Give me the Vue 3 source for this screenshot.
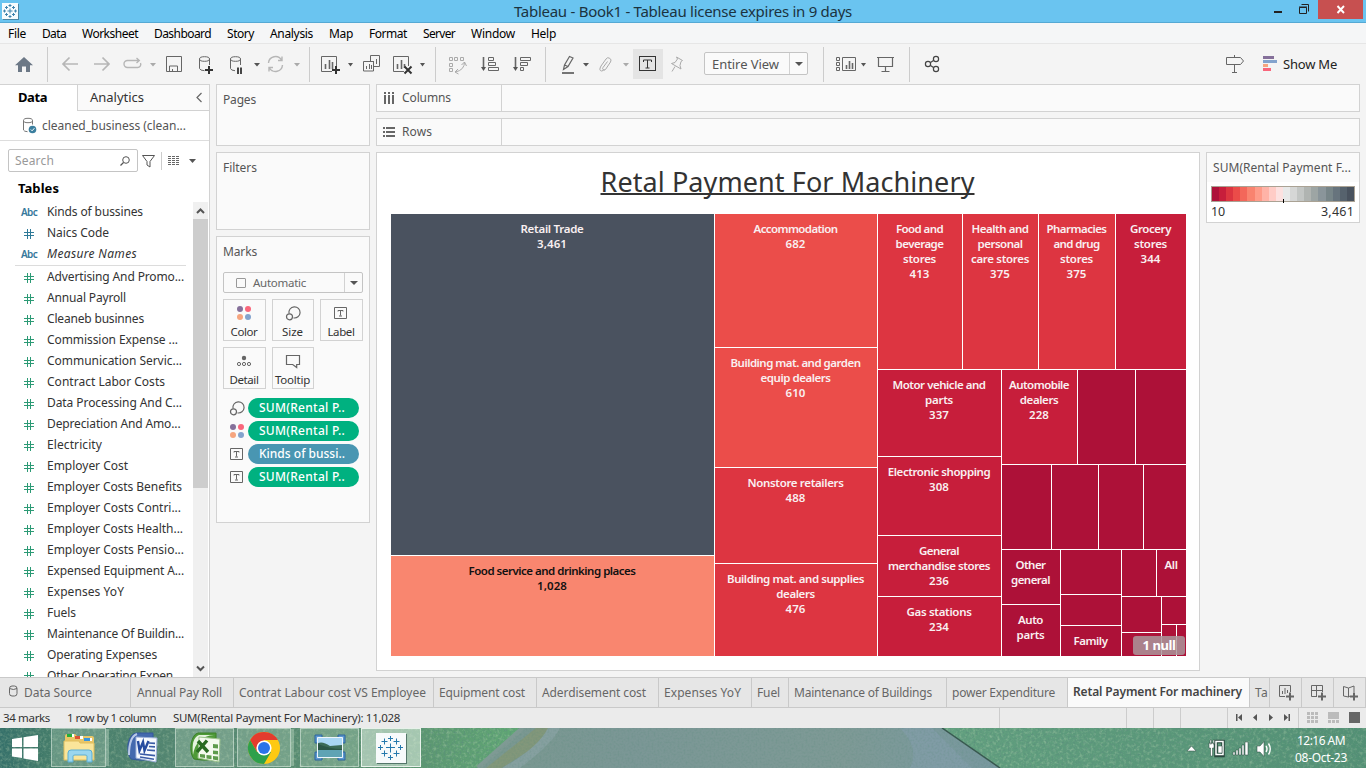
<script setup>
// Spreads the letters of a label so that it takes the given width in pixels.
const vFit = (el, { value }) => {
  el.style.letterSpacing = '0px'
  const natural = el.getBoundingClientRect().width
  el.style.letterSpacing = (value - natural) / el.textContent.trim().length + 'px'
}

const menu = [['File', 18], ['Data', 24], ['Worksheet', 56], ['Dashboard', 57], ['Story', 27], ['Analysis', 43], ['Map', 24], ['Format', 38], ['Server', 32], ['Window', 44], ['Help', 25]]

const dims = [['Abc', 'Kinds of bussines', 96], ['#', 'Naics Code', 62], ['Abc', 'Measure Names', 90]]
const measures = [
  ['Advertising And Promo...', 137], ['Annual Payroll', 79], ['Cleaneb businnes', 97], ['Commission Expense ...', 131],
  ['Communication Servic...', 135], ['Contract Labor Costs', 118], ['Data Processing And C...', 135], ['Depreciation And Amo...', 133.5],
  ['Electricity', 55], ['Employer Cost', 81], ['Employer Costs Benefits', 135], ['Employer Costs Contri...', 134],
  ['Employer Costs Health...', 136], ['Employer Costs Pensio...', 137], ['Expensed Equipment A...', 137], ['Expenses YoY', 77],
  ['Fuels', 29], ['Maintenance Of Buildin...', 137], ['Operating Expenses', 110], ['Other Operating Expen...', 135],
]

const markButtons = [['color', 'Color', 27], ['size', 'Size', 21], ['label', 'Label', 27], ['detail', 'Detail', 29], ['tooltip', 'Tooltip', 35]]
const pills = [['size', 'SUM(Rental P..', 86], ['color', 'SUM(Rental P..', 86], ['label', 'Kinds of bussi..', 86, true], ['label', 'SUM(Rental P..', 86]]

const tones = { a: '#4a525f', b: '#f9866f', c: '#eb4d4a', d: '#dd3541', e: '#c71e3b', f: '#ad1138' }
// left, top, right, bottom, tone, label lines with their widths
const cells = [
  [391, 214, 715, 556, 'a', [['Retail Trade', 63], ['3,461', 30]]],
  [391, 556, 715, 657, 'b', [['Food service and drinking places', 167], ['1,028', 30]]],
  [715, 214, 878, 348, 'c', [['Accommodation', 84], ['682', 20]]],
  [715, 348, 878, 468, 'c', [['Building mat. and garden', 130], ['equip dealers', 70], ['610', 20]]],
  [715, 468, 878, 564, 'd', [['Nonstore retailers', 96], ['488', 20]]],
  [715, 564, 878, 657, 'd', [['Building mat. and supplies', 137], ['dealers', 38.5], ['476', 20]]],
  [878, 214, 963, 370, 'd', [['Food and', 47], ['beverage', 48], ['stores', 33], ['413', 20]]],
  [963, 214, 1039, 370, 'd', [['Health and', 57], ['personal', 45], ['care stores', 58], ['375', 20]]],
  [1039, 214, 1116, 370, 'd', [['Pharmacies', 60], ['and drug', 46], ['stores', 33], ['375', 20]]],
  [1116, 214, 1187, 370, 'e', [['Grocery', 41], ['stores', 33], ['344', 20]]],
  [878, 370, 1002, 457, 'e', [['Motor vehicle and', 93], ['parts', 28], ['337', 20]]],
  [878, 457, 1002, 536, 'e', [['Electronic shopping', 102.5], ['308', 20]]],
  [878, 536, 1002, 597, 'e', [['General', 40], ['merchandise stores', 102], ['236', 20]]],
  [878, 597, 1002, 657, 'e', [['Gas stations', 65], ['234', 20]]],
  [1002, 370, 1078, 465, 'e', [['Automobile', 60], ['dealers', 38.5], ['228', 20]]],
  [1078, 370, 1136, 465, 'f', []],
  [1136, 370, 1187, 465, 'f', []],
  [1002, 465, 1052, 550, 'f', []],
  [1052, 465, 1099, 550, 'f', []],
  [1099, 465, 1144, 550, 'f', []],
  [1144, 465, 1187, 550, 'f', []],
  [1002, 550, 1061, 605, 'f', [['Other', 30], ['general', 39]]],
  [1002, 605, 1061, 657, 'f', [['Auto', 25], ['parts', 28]]],
  [1061, 550, 1122, 595, 'f', []],
  [1061, 595, 1122, 626, 'f', []],
  [1061, 626, 1122, 657, 'f', [['Family', 34]]],
  [1122, 550, 1157, 597, 'f', []],
  [1157, 550, 1187, 597, 'f', [['All', 13]]],
  [1122, 597, 1162, 633, 'f', []],
  [1122, 633, 1162, 657, 'f', []],
  [1162, 597, 1187, 625, 'f', []],
  [1162, 625, 1177, 657, 'f', []],
  [1177, 625, 1187, 657, 'f', []],
]
const edges = (a, b) => [...new Set(cells.flatMap((c) => [c[a], c[b]]))].sort((m, n) => m - n)
const xs = edges(0, 2)
const ys = edges(1, 3)
const tracks = (list) => list.slice(1).map((v, i) => v - list[i] + 'px').join(' ')
const gridStyle = { gridTemplateColumns: tracks(xs), gridTemplateRows: tracks(ys) }
const cellStyle = (c) => ({
  gridArea: [ys.indexOf(c[1]) + 1, xs.indexOf(c[0]) + 1, ys.indexOf(c[3]) + 1, xs.indexOf(c[2]) + 1].join(' / '),
  background: tones[c[4]],
})

const ramp = ['#ae123a', '#c71e3b', '#dc3540', '#eb4c49', '#f3675a', '#f9836f', '#fe9b89', '#ffb3a7', '#ffccc6', '#fce1e0', '#e8e9e9', '#d6d7d6', '#c3c6c4', '#b0b4b1', '#9da5a4', '#8a959a', '#778588', '#67747d', '#56626d', '#49525e']

// label, label width, tab width
const tabs = [['Annual Pay Roll', 85, 103], ['Contrat Labour cost VS Employee', 187, 200], ['Equipment cost', 86, 103], ['Aderdisement cost', 104, 122], ['Expenses YoY', 77, 93], ['Fuel', 23, 37], ['Maintenance of Buildings', 138, 158], ['power Expenditure', 103, 121]]
</script>

<template>
  <div class="screen">
    <header class="titlebar">
      <svg class="logo" width="16" height="16" viewBox="0 0 16 16">
        <rect width="16" height="16" fill="#f7fbfd" />
        <path d="M8 5.500v5M5.500 8h5M8 1v3M6.500 2.500h3M8 12v3M6.500 13.500h3M2.500 6.500v3M1 8h3M13.500 6.500v3M12 8h3M4.500 3v3M3 4.500h3M11.500 3v3M10 4.500h3M4.500 10v3M3 11.500h3M11.500 10v3M10 11.500h3" stroke="#3f83ad" fill="none" />
      </svg>
      <h1><span v-fit="338">Tableau - Book1 - Tableau license expires in 9 days</span></h1>
      <svg class="winbtns" width="96" height="22" viewBox="1270 0 96 22">
        <rect x="1318" width="45" height="19" fill="#c75050" />
        <path d="M1274 12h8" stroke="#222" stroke-width="2" />
        <path d="M1299.500 7.500h7v6h-7zM1299 7h8M1301.500 4.500h7v7" stroke="#222" fill="none" />
        <path d="M1337.500 6l6.500 7M1344 6l-6.500 7" stroke="#fff" stroke-width="1.900" />
      </svg>
    </header>

    <nav class="menubar"><span v-for="m in menu" :key="m[0]" v-fit="m[1]">{{ m[0] }}</span></nav>

    <div class="toolbar">
      <svg width="48" height="40" viewBox="0 44 48 40">
        <path d="M15 65.200L24 57l9 8.200h-3V72h-4v-5.500h-4V72h-4v-6.800z" fill="#6c7886" />
        <path d="M47.500 47v35" stroke="#ccc" />
      </svg>
      <svg width="262" height="40" viewBox="48 44 262 40" fill="none" stroke="#666">
        <g stroke="#b6b6b6" stroke-width="1.700">
          <path d="M78 64H63M69.500 57.500L63 64l6.500 6.500M94 64h15M102.500 57.500L109 64l-6.500 6.500" />
          <path d="M132 67.500h-4.500a3.500 3.500 0 0 1 0-7H139M136.500 58l2.800 2.500-2.800 2.500M131 67.500h6.500a3.200 3.200 0 0 0 3-4.500" stroke-width="1.400" />
          <path d="M268.500 63a7 7 0 0 1 13-3M282.500 65a7 7 0 0 1-13 3M282 56.500v4h-4M269 71.500v-4h4" stroke-width="1.400" />
        </g>
        <path d="M150 63h6l-3 3.500zM294 63h6l-3 3.500z" fill="#aaa" stroke="none" />
        <path d="M254 63h6l-3 3.500z" fill="#555" stroke="none" />
        <path d="M166.500 56.500h15v15h-15zM169.500 71v-5h8v5M172.500 71v-2" />
        <ellipse cx="204.500" cy="59" rx="5" ry="2.300" />
        <path d="M199.500 59v9.500q.5 2 5 2.200M209.500 59v6" />
        <path d="M209 66v8M205 70h8" stroke="#333" stroke-width="2" />
        <ellipse cx="235.500" cy="59" rx="5" ry="2.300" />
        <path d="M230.500 59v9.500q.5 2 4.500 2.200M240.500 59v6" />
        <path d="M238 67.500v6.500M241 67.500v6.500" stroke="#333" stroke-width="1.800" />
        <path d="M309.500 47v35" stroke="#ccc" />
      </svg>
      <svg width="126" height="40" viewBox="310 44 126 40" fill="none" stroke="#666">
        <path d="M332 71.500h-10.500v-15h15V66M393.500 71.500v-15h15V66M393.500 71.500H404" />
        <path d="M325.500 64v5M329.500 60v9M332.500 62v7M397.500 64v5M401.500 60v9M404.500 64v4" stroke-width="1.600" />
        <path d="M336 66v8M332 70h8M404.500 66.500l7 7M411.500 66.500l-7 7" stroke="#333" stroke-width="2" />
        <path d="M370.500 61v-5.500h9v11h-5.500M363.500 61.500h10v9.500h-10zM373.500 61v3M376.500 59v5M366.500 66v3M369.500 64v5M371.500 65v4" />
        <path d="M348 63h5l-2.500 3.500zM420 63h5l-2.500 3.500z" fill="#555" stroke="none" />
        <path d="M435.500 47v35" stroke="#ccc" />
      </svg>
      <svg width="110" height="40" viewBox="436 44 110 40" fill="none" stroke="#666">
        <g stroke="#aaa"><path d="M449.500 57.500h3v3h-3zM454.500 57.500h3v3h-3zM460.500 57.500h3v3h-3zM449.500 63.500h3v3h-3zM449.500 68.500h3v3h-3zM464.500 62q0 8-9 10M461.500 65l3-3 2 4M458 69l-3 3 3.500 2" /></g>
        <path d="M488.500 57.500h5v3h-5zM488.500 62.500h7v3h-7zM488.500 67.500h10v3h-10zM520.500 57.500h10v3h-10zM520.500 62.500h7v3h-7zM520.500 67.500h3v3h-3z" />
        <path d="M483.500 57v11M515.500 57v11" stroke-width="1.600" />
        <path d="M481 67h5l-2.500 4zM513 67h5l-2.500 4z" fill="#555" stroke="none" />
        <path d="M545.500 47v35" stroke="#ccc" />
      </svg>
      <svg width="158" height="40" viewBox="546 44 158 40" fill="none" stroke="#666">
        <path d="M562 73h12" stroke-width="1.800" />
        <path d="M563.500 69.500l1-4.500 5-8.500 3.500 1.500-5 8.500zM564.500 65l3.500 1.500" stroke-width="1.200" />
        <path d="M583 63h6l-3 3.500z" fill="#555" stroke="none" />
        <path d="M601 66l5-7a2.600 2.600 0 0 1 4.500 3l-5 7.500a1.500 1.500 0 0 1-2.500-2l4.500-6M601 66q-2.500 4.500.5 5 2 0 3-2" stroke="#aaa" />
        <path d="M623 63h6l-3 3.500z" fill="#aaa" stroke="none" />
        <rect x="633" y="49" width="30" height="30" fill="#e4e4e4" stroke="none" />
        <rect x="639.500" y="56.500" width="16" height="14" stroke="#333" />
        <path d="M643.500 62v-2h8v2M647.500 60v8M645.500 68h4" stroke="#333" />
        <path d="M676.500 57l6 3.500-1.500 1-1 4 1 3.500-9.500-5.500 3.500-1 2.500-3.500zM675 66.500l-3 5" stroke="#aaa" />
      </svg>
      <div class="view"><span v-fit="67">Entire View</span><b class="drop"><i class="caret"></i></b></div>
      <svg width="418" height="40" viewBox="808 44 418 40" fill="none" stroke="#666">
        <path d="M823.500 47v35M909.500 47v35" stroke="#ccc" />
        <path d="M836.500 57.500h3v3h-3zM836.500 62.500h3v3h-3zM836.500 67.500h3v3h-3zM842.500 57.500h13v13h-13z" />
        <path d="M846.500 65v4M849.500 61v8M852.500 63v6" stroke-width="1.600" />
        <path d="M861 63h5l-2.500 3.500z" fill="#555" stroke="none" />
        <path d="M877 57.500h17M878.500 58v8.500h14V58M885.500 67v5M881.500 71.500h8" stroke-width="1.200" />
        <g stroke="#444" stroke-width="1.200"><path d="M930.500 62.500l3-2M930.500 65.500l3 2" /><circle cx="928" cy="64" r="2.600" /><circle cx="936" cy="59" r="2.600" /><circle cx="936" cy="69" r="2.600" /></g>
      </svg>
      <svg width="57" height="40" viewBox="1226 44 57 40" fill="none" stroke="#666">
        <path d="M1226.500 57.500h14l3 3.500-3 3.500h-14zM1234.500 55v2M1234.500 65v7.500M1232 72.500h5" />
        <g stroke="none"><path d="M1263 56h11v3h-11z" fill="#85709a" /><path d="M1263 60h14v3h-14z" fill="#83a3cd" /><path d="M1263 64h5v3h-5z" fill="#f6a57f" /><path d="M1263 68h8v3h-8z" fill="#f9667b" /></g>
      </svg>
      <span class="showme"><span v-fit="54">Show Me</span></span>
    </div>

    <main class="main">
      <aside class="pane">
        <div class="panetabs">
          <b><span v-fit="29">Data</span></b>
          <div><span v-fit="54">Analytics</span><svg width="8" height="12" viewBox="0 0 8 12"><path d="M6.500 1L2 5.500l4.500 4.500" fill="none" stroke="#666" stroke-width="1.200" /></svg></div>
        </div>
        <div class="source">
          <svg width="15" height="18" viewBox="22 117 15 18" fill="none" stroke="#777">
            <ellipse cx="28" cy="120.500" rx="4.500" ry="2.200" /><path d="M23.500 120.500v9.500q.5 1.500 4 1.700M32.500 120.500v4" />
            <circle cx="32.500" cy="129.500" r="3.800" fill="#3b7f9f" stroke="none" /><path d="M30.800 129.500l1.300 1.300 2.300-2.600" stroke="#fff" />
          </svg>
          <span v-fit="144">cleaned_business (clean...</span>
        </div>
        <div class="searchrow">
          <div class="search"><span v-fit="39">Search</span><svg width="10" height="10" viewBox="0 0 10 10"><circle cx="6" cy="4" r="3.300" fill="none" stroke="#555" /><path d="M3.500 6.500L.5 9.500" stroke="#555" stroke-width="1.200" /></svg></div>
          <svg width="56" height="20" viewBox="141 150 56 20" fill="none" stroke="#555">
            <path d="M142.500 154.500h12l-4.500 6v5.500l-3-2v-3.500z" /><path d="M161.500 151v18" stroke="#ccc" />
            <path d="M168 155.500h12M168 157.500h12M168 159.500h12M168 161.500h12M168 163.500h12" stroke-dasharray="3 1" stroke="#666" />
            <path d="M189 158h7l-3.500 4z" fill="#555" stroke="none" />
          </svg>
        </div>
        <div class="tables"><span v-fit="41">Tables</span></div>
        <div class="listwrap">
          <div class="list">
            <div v-for="(d, i) in dims" :key="d[1]" class="field" :class="{ it: i === 2 }">
              <span v-if="d[0] === 'Abc'" class="abc"><span v-fit="16">Abc</span></span>
              <svg v-else class="hash" width="10" height="10" viewBox="0 0 10 10"><path d="M3.500 0v10M6.500 0v10M0 3.500h10M0 6.500h10" stroke="#2f7a98" fill="none" /></svg>
              <span v-fit="d[2]">{{ d[1] }}</span>
            </div>
            <hr />
            <div v-for="m in measures" :key="m[0]" class="field">
              <svg class="hash" width="10" height="10" viewBox="0 0 10 10"><path d="M3.500 0v10M6.500 0v10M0 3.500h10M0 6.500h10" stroke="#2c9a75" fill="none" /></svg>
              <span v-fit="m[1]">{{ m[0] }}</span>
            </div>
          </div>
          <div class="scroll">
            <svg width="15" height="17" viewBox="0 0 15 17"><path d="M4 11l3.500-3.500L11 11" fill="none" stroke="#555" stroke-width="2" /></svg>
            <div class="thumb"></div>
            <svg width="15" height="17" viewBox="0 0 15 17"><path d="M4 6.500L7.500 10 11 6.500" fill="none" stroke="#555" stroke-width="2" /></svg>
          </div>
        </div>
      </aside>

      <section class="cards">
        <div class="card pages"><span v-fit="33">Pages</span></div>
        <div class="card filters"><span v-fit="34">Filters</span></div>
        <div class="card marks">
          <span v-fit="34">Marks</span>
          <div class="select"><i class="sq"></i><span v-fit="53">Automatic</span><b class="drop"><i class="caret"></i></b></div>
          <div class="btns">
            <div v-for="b in markButtons" :key="b[0]" class="btn">
              <svg width="16" height="16"><use :href="'#i-' + b[0]" /></svg>
              <span v-fit="b[2]">{{ b[1] }}</span>
            </div>
          </div>
          <div class="pills">
            <div v-for="(p, i) in pills" :key="i" class="pillrow">
              <svg width="16" height="16"><use :href="'#i-' + p[0]" /></svg>
              <div class="pill" :class="{ blue: p[3] }"><span v-fit="p[2]">{{ p[1] }}</span></div>
            </div>
          </div>
        </div>
      </section>

      <section class="work">
        <div class="shelf"><div><svg width="12" height="12" viewBox="0 0 12 12"><path d="M1 0h2v2H1zM5 0h2v2H5zM9 0h2v2H9zM1 3h2v9H1zM5 3h2v9H5zM9 3h2v9H9z" fill="#666" /></svg><span v-fit="49">Columns</span></div></div>
        <div class="shelf"><div><svg width="12" height="12" viewBox="0 0 12 12"><path d="M0 1h2v2H0zM0 5h2v2H0zM0 9h2v2H0zM3 1h9v2H3zM3 5h9v2H3zM3 9h9v2H3z" fill="#666" /></svg><span v-fit="30">Rows</span></div></div>
        <div class="canvasrow">
          <div class="sheet">
            <h2><span v-fit="374">Retal Payment For Machinery</span></h2>
            <div class="treemap" :style="gridStyle">
              <div v-for="(c, i) in cells" :key="i" class="cell" :class="{ darktext: c[4] === 'b' }" :style="cellStyle(c)">
                <div v-for="(l, j) in c[5]" :key="j"><span v-fit="l[1]">{{ l[0] }}</span></div>
              </div>
              <div class="nulls"><span v-fit="33">1 null</span></div>
            </div>
          </div>
          <div class="legend">
            <div class="lh"><span v-fit="138">SUM(Rental Payment F...</span></div>
            <div class="ramp"><i v-for="r in ramp" :key="r" :style="{ background: r }"></i></div>
            <div class="ends"><span v-fit="14">10</span><span v-fit="33">3,461</span></div>
          </div>
        </div>
      </section>
    </main>

    <div class="tabs">
      <div class="tab ds"><svg width="9" height="12" viewBox="0 0 9 12"><rect x=".5" y="1" width="7.500" height="10" rx="2.500" fill="none" stroke="#666" /><path d="M.5 3.500q4 2 7.500 0" fill="none" stroke="#666" /></svg><span v-fit="68">Data Source</span></div>
      <div v-for="t in tabs" :key="t[0]" class="tab" :style="{ width: t[2] + 'px' }"><span v-fit="t[1]">{{ t[0] }}</span></div>
      <div class="tab active"><span v-fit="169">Retal Payment For machinery</span></div>
      <div class="tab cut"><span v-fit="13">Ta</span></div>
      <div class="tab new"><svg width="16" height="16" viewBox="0 0 16 16" fill="none" stroke="#666"><path d="M7 11.500H1.500v-11h11V7M4.500 6v3M7 3v6M9.500 5v3" /><path d="M12 7.500v8M8 11.500h8" stroke-width="2" /></svg></div>
      <div class="tab new"><svg width="16" height="16" viewBox="0 0 16 16" fill="none" stroke="#666"><path d="M7 11.500H1.500v-11h11V7M6.500 0v11M1 5.500h11" /><path d="M12 7.500v8M8 11.500h8" stroke-width="2" /></svg></div>
      <div class="tab new"><svg width="16" height="16" viewBox="0 0 16 16" fill="none" stroke="#666"><path d="M8 11L6.500 12 1.500 11V1.500L6.500 3 12 1v6M6.500 3v9" /><path d="M12 7.500v8M8 11.500h8" stroke-width="2" /></svg></div>
    </div>

    <div class="status">
      <span v-fit="47">34 marks</span><span v-fit="89">1 row by 1 column</span><span v-fit="227">SUM(Rental Payment For Machinery): 11,028</span>
      <svg width="367" height="20" viewBox="999 708 367 20" fill="#555">
        <path d="M999.500 708v20M1126.500 708v20M1153.500 708v20M1180.500 708v20M1227.500 708v20M1298.500 708v20" stroke="#ccc" />
        <path d="M1236 714h1.500v7h-1.500zM1242 714v7l-4-3.500zM1257 714v7l-4-3.500zM1269 714v7l4-3.500zM1284 714v7l4-3.500zM1288.500 714h1.500v7h-1.500z" />
        <path d="M1307 712h3v3h-3zM1311 712h3v3h-3zM1315 712h3v3h-3zM1307 716h3v3h-3zM1311 716h3v3h-3zM1315 716h3v3h-3zM1307 720h3v3h-3zM1311 720h3v3h-3zM1315 720h3v3h-3zM1328 712h11v7h-11zM1328 720h3v3h-3zM1332 720h3v3h-3zM1336 720h3v3h-3z" fill="#bbb" />
        <path d="M1349 712h11v11h-11z" fill="#666" />
      </svg>
    </div>

    <footer class="taskbar">
      <svg class="wall" width="1366" height="40" viewBox="0 0 1366 40">
        <defs>
          <linearGradient id="grass"><stop offset="0" stop-color="#35706a" /><stop offset=".04" stop-color="#447c69" /><stop offset=".15" stop-color="#578872" /><stop offset=".28" stop-color="#5a9070" /><stop offset=".38" stop-color="#60a874" /><stop offset=".7" stop-color="#62a07f" /><stop offset="1" stop-color="#529074" /></linearGradient>
          <linearGradient id="road"><stop offset="0" stop-color="#7a9890" /><stop offset=".3" stop-color="#7b9796" /><stop offset=".7" stop-color="#7e9a96" /><stop offset="1" stop-color="#7898a0" /></linearGradient>
          <filter id="grain" x="0" y="0" width="100%" height="100%"><feTurbulence type="fractalNoise" baseFrequency=".5" numOctaves="3" seed="4" /><feColorMatrix values="0 0 0 0 .1  0 0 0 0 .26  0 0 0 0 .2  1.600 0 0 0 -.7" /></filter>
          <filter id="light" x="0" y="0" width="100%" height="100%"><feTurbulence type="fractalNoise" baseFrequency=".3" numOctaves="3" seed="9" /><feColorMatrix values="0 0 0 0 .58  0 0 0 0 .74  0 0 0 0 .5  0 1.200 0 0 -.56" /></filter>
        </defs>
        <rect width="1366" height="40" fill="url(#grass)" />
        <rect width="1366" height="40" filter="url(#light)" opacity=".7" />
        <rect width="1366" height="40" filter="url(#grain)" />
        <path d="M523 0H942L1000 40H478z" fill="url(#road)" />
        <path d="M536 0h18l-18 18-34 22h-16z" fill="#87976f" opacity=".65" />
        <path d="M523 0L478 40" stroke="#7f9a94" stroke-width="5" />
        <path d="M560 0q-8 16-40 40h-18q36-20 46-40z" fill="#86a0a0" />
        <path d="M942 0l58 40" stroke="#38584f" stroke-width="1.500" />
        <path d="M900 0h32l40 40h-62q10-20-10-40z" fill="#86a0b0" opacity=".5" />
        <clipPath id="roadclip"><path d="M523 0H942L1000 40H478z" /></clipPath>
        <g clip-path="url(#roadclip)"><rect width="1366" height="40" filter="url(#grain)" opacity=".4" /></g>
      </svg>
      <div class="apps">
        <div class="app start"><svg width="27" height="26" viewBox="0 0 27 26"><path d="M0 4l10-1.500V12H0zM11.500 2.200L26 0v12H11.500zM0 13.500h10V23L0 21.500zM11.500 13.500H26V26l-14.500-2.400z" fill="#fff" /></svg></div>
        <div class="app box stack exp"><svg width="34" height="32" viewBox="0 0 34 32">
          <path d="M3 4q0-2 2-2h8l2 2h15q2 0 2 2v22H3z" fill="#e9c667" /><path d="M5 2h5v3H5z" fill="#25ad3a" /><path d="M10 2h2v3h-2zM18 4h3v3h-3zM28 6h2v3h-2z" fill="#fff" /><path d="M13 4h5v3h-5z" fill="#dc5335" /><path d="M22 6h6v3h-6z" fill="#3a94db" /><path d="M2 9h15l1 2h14v17H2z" fill="#fae59a" stroke="#dfbd5d" /><path d="M6 30V21q0-3 3-3h18q3 0 3 3v9h-5v-6q0-1-2-1H13q-2 0-2 1v6z" fill="#9ad6ee" stroke="#5caed3" /></svg></div>
        <div class="app word"><svg width="32" height="32" viewBox="0 0 32 32">
          <path d="M10 1h17v24q-6 5-22 2-4-5-3-15Q4 2 10 1z" fill="#4469ae" stroke="#35599c" /><path d="M11 2q-8 3-8 21" fill="none" stroke="#b9c9e8" stroke-width="2" /><path d="M10 5l21 1-1 24-20-4z" fill="#f7faff" stroke="#9fb2da" /><path d="M23 11l6 .4M23 14.500l6 .4M21 18l8 .6M14 22l15 1.600M14 25l14 2.200" stroke="#3a5ba6" stroke-width="1.600" /><path d="M12 9l1.500 9.500L17 10l1.500 8.500L22.500 9" fill="none" stroke="#254ba0" stroke-width="2.400" /></svg></div>
        <div class="app box xl"><svg width="32" height="32" viewBox="0 0 32 32">
          <path d="M9 1h18v24q-6 5-22 2-4-5-3-15Q4 2 9 1z" fill="#4f9a38" stroke="#3c8029" /><path d="M10 3h15q-18 1-21 20Q2 6 10 3z" fill="#e6f3df" /><path d="M10 5l21 2-1 23-21-4z" fill="#f4faee" stroke="#9cc48c" /><path d="M24 12l5 .4v4l-5-.4zM24 18.500l5 .5v3.500l-5-.5zM11 22l5 .5V26l-5-.8zM17.500 23l5 .5v3.800l-5-.8zM24 24l5 .5v4l-5-.9z" fill="#5e9b4c" /><path d="M9 9l10 11M18 8.500L8 20" stroke="#2a6b22" stroke-width="3.400" /></svg></div>
        <div class="app box stack chrome"><svg width="34" height="34" viewBox="-17 -17 34 34"><circle r="16" fill="#fdc912" /><path d="M-13.900-8A16 16 0 0 1 13.900-8H0L-7 4z" fill="#e33b2e" /><path d="M-13.900-8A16 16 0 0 0 0 16L7 4-7 4z" fill="#2ea04b" /><circle r="7.600" fill="#fff" /><circle r="6" fill="#2b73e8" /></svg></div>
        <div class="app box photo"><svg width="32" height="28" viewBox="0 0 32 28"><path d="M1 1h7v3H4v5H1zM31 1h-7v3h4v5h3zM1 26h7v-3H4v-5H1zM31 26h-7v-3h4v-5h3z" fill="#5b97d0" stroke="#2f649a" /><path d="M3.500 3.500h25v20h-25z" fill="#a8d6f3" stroke="#eef5fa" /><path d="M4 9q5-2 12 3l12-1v5H4z" fill="#3b6b57" /><path d="M4 10q12 5 24 5v2H4z" fill="#2b5646" /><path d="M4 16h24v7H4z" fill="#5fa3b4" /></svg></div>
        <div class="app box tab-app"><svg width="30" height="30" viewBox="0 0 30 30"><rect width="30" height="30" fill="#f7fafb" /><path d="M14.500 10.500v9M10 14.500h9M14.500 3v5M12 5.500h5M14.500 22v5M12 24.500h5M4.500 12v5M2 14.500h5M24.500 12v5M22 14.500h5M8.500 5.500v6M5.500 8.500h6M20.500 5.500v6M17.500 8.500h6M8.500 17.500v6M5.500 20.500h6M20.500 17.500v6M17.500 20.500h6" stroke="#2478ac" fill="none" /></svg></div>
      </div>
      <svg class="tray" width="90" height="20" viewBox="1185 738 90 20" fill="#fff" stroke="#29463d" stroke-width=".5">
        <path d="M1187 751h9l-4.500-5z" />
        <path d="M1216 741.500h7v14h-7z" fill="none" stroke="#29463d" stroke-width="3.500" /><path d="M1216 741.500h7v13h-7z" fill="none" stroke="#fff" stroke-width="1.500" /><path d="M1218 746h4v7h-4zM1209 743h5v5h-1.500v8h-2v-8H1209zM1210 740h1.500v4h-1.500zM1213 740h1.500v4h-1.500z" />
        <path d="M1233 752h2v3h-2zM1236 750h2v5h-2zM1239 748h2v7h-2zM1242 745h2v10h-2zM1245 742h3v13h-3z" />
        <path d="M1257 746h3l4-4.500v15l-4-4.500h-3z" /><path d="M1266 746q2 3 0 6M1268.500 743.500q3.500 5.500 0 11" fill="none" stroke="#fff" stroke-width="1.400" />
      </svg>
      <div class="clock"><span v-fit="48">12:16 AM</span><span v-fit="52">08-Oct-23</span></div>
    </footer>

    <svg class="symbols" width="0" height="0">
      <symbol id="i-color" viewBox="0 0 16 16"><circle cx="4" cy="4" r="3" fill="#85709a" /><circle cx="12" cy="4" r="3" fill="#f9667b" /><circle cx="4" cy="12" r="3" fill="#f6a57f" /><circle cx="12" cy="12" r="3" fill="#83a3cd" /></symbol>
      <symbol id="i-size" viewBox="0 0 16 16"><g fill="none" stroke="#666" stroke-width="1.200"><path d="M4 8.500a5.600 5.600 0 1 1 4.500 4.400" /><circle cx="4.500" cy="11.800" r="3" /></g></symbol>
      <symbol id="i-label" viewBox="0 0 16 16"><path d="M1.500 2.500h12v11h-12zM5 6.500v-1h5v1M7.500 5.500v5M6 11h3" fill="none" stroke="#666" /></symbol>
      <symbol id="i-detail" viewBox="0 0 16 16"><circle cx="8" cy="5" r="2.200" fill="#666" /><g fill="none" stroke="#666"><circle cx="3" cy="11" r="1.600" /><circle cx="8" cy="11" r="1.600" /><circle cx="13" cy="11" r="1.600" /></g></symbol>
      <symbol id="i-tooltip" viewBox="0 0 16 16"><path d="M1.500 2.500h13v9h-2.800v3l-4-3H1.500z" fill="none" stroke="#666" stroke-width="1.200" /></symbol>
    </svg>
  </div>
</template>

<style>
html, body { margin: 0; overflow: hidden; }
</style>

<style scoped>
.screen { width: 1366px; height: 768px; overflow: hidden; display: flex; flex-direction: column; background: #f4f4f4; font: 12px/20px "Noto Sans", sans-serif; color: #333; }
.screen * { box-sizing: border-box; }
.screen span { display: inline-block; white-space: nowrap; }
svg { display: block; flex: none; }
.symbols { position: absolute; }

.titlebar { height: 23px; flex: none; background: #6ac4f0; border-bottom: 1px solid #55a9d4; display: flex; justify-content: space-between; }
.logo { margin: 3px 0 0 2px; box-shadow: 1px 1px 0 #4b86a4; }
h1 { margin: 0; padding-left: 78px; font-size: 15px; font-weight: 400; line-height: 23px; color: #1b333f; }
.menubar { height: 21px; flex: none; background: #f5f6f7; border-bottom: 1px solid #e6e6e6; padding-left: 8px; display: flex; gap: 16px; line-height: 21px; color: #000; }
.toolbar { height: 40px; flex: none; display: flex; align-items: center; }
.caret { flex: none; width: 0; height: 0; border: 4px solid transparent; border-top-color: #555; border-bottom: 0; }
.drop { width: 18px; height: 100%; margin-left: auto; border-left: 1px solid #d2d2d2; display: flex; align-items: center; justify-content: center; }
.view { width: 104px; height: 23px; border: 1px solid #c4c4c4; border-radius: 2px; background: #fafafa; display: flex; align-items: center; padding-left: 7px; margin-bottom: 1px; font-size: 13px; color: #555; }
.showme { font-size: 13px; color: #222; margin-bottom: 1px; }

.main { height: 593px; flex: none; display: flex; gap: 6px; }
.pane { width: 210px; background: #fff; border-right: 1px solid #d2d2d2; border-top: 1px solid #d2d2d2; display: flex; flex-direction: column; }
.panetabs { height: 26px; flex: none; display: flex; font-size: 13px; line-height: 25px; }
.panetabs b { width: 77px; padding-left: 18px; color: #000; }
.panetabs div { flex: 1; display: flex; align-items: center; justify-content: space-between; padding: 0 6px 0 12px; border: solid #d2d2d2; border-width: 0 0 1px 1px; background: #fafafa; }
.source { height: 30px; flex: none; border-bottom: 1px solid #ddd; display: flex; align-items: center; gap: 5px; padding-left: 22px; color: #555; }
.searchrow { display: flex; align-items: center; gap: 3px; padding: 8px 0 0 8px; }
.search { width: 130px; height: 23px; border: 1px solid #c4c4c4; border-radius: 2px; display: flex; align-items: center; justify-content: space-between; padding: 0 7px 0 6px; color: #999; }
.tables { padding-left: 18px; height: 30px; line-height: 32px; flex: none; font-size: 13px; font-weight: 700; color: #000; }
.listwrap { flex: 1; min-height: 0; display: flex; }
.list { width: 193px; overflow: hidden; }
.field { height: 21px; display: flex; align-items: center; padding-left: 24px; line-height: 20px; padding-bottom: 1px; }
.field > span:last-child { margin-left: 13px; }
.abc { width: 21px; margin: 0 -8px 0 -3px; font-size: 10px; font-weight: 600; color: #35789b; }
.hash { margin-top: 1px; }
.it { font-style: italic; }
.it .abc { font-style: normal; }
hr { margin: 0 7px 1px 15px; border: 0; border-top: 1px solid #dcdcdc; }
.scroll { width: 15px; display: flex; flex-direction: column; background: #f0f0f0; }
.thumb { height: 269px; background: #cdcdcd; margin-bottom: auto; }

.cards { width: 154px; display: flex; flex-direction: column; gap: 6px; color: #555; }
.card { border: 1px solid #d2d2d2; background: #fafafa; padding: 5px 6px; }
.pages { height: 62px; }
.filters { height: 78px; }
.marks { height: 287px; }
.select { width: 140px; height: 21px; margin-top: 10px; border: 1px solid #c4c4c4; border-radius: 2px; display: flex; align-items: center; padding-left: 12px; font-size: 11.500px; color: #666; }
.sq { width: 10px; height: 10px; border: 1px solid #999; border-radius: 1px; margin-right: 7px; }
.btns { display: grid; grid-template-columns: 43px 42px 43px; grid-auto-rows: 42px; gap: 6px; margin-top: 6px; }
.btn { border: 1px solid #d2d2d2; display: flex; flex-direction: column; align-items: center; padding: 5px 1px 0 0; font-size: 11.500px; color: #333; line-height: 20px; }
.btn svg { margin-bottom: 1px; }
.pills { display: grid; gap: 3px; margin-top: 9px; padding-left: 6px; }
.pillrow { display: flex; align-items: center; gap: 3px; height: 20px; }
.pill { width: 111px; height: 20px; border-radius: 10px; background: #00b180; color: #fff; padding-left: 11px; line-height: 19px; font-weight: 500; }
.pill.blue { background: #4996b2; }

.work { width: 984px; display: flex; flex-direction: column; gap: 6px; }
.shelf { height: 28px; flex: none; border: 1px solid #d2d2d2; background: #fafafa; }
.shelf div { width: 125px; height: 26px; border-right: 1px solid #d2d2d2; display: flex; align-items: center; gap: 7px; padding-left: 6px; color: #555; }
.canvasrow { display: flex; gap: 6px; align-items: flex-start; }
.sheet { width: 824px; height: 519px; background: #fff; border: 1px solid #d2d2d2; padding-left: 14px; }
h2 { margin: 0; height: 61px; padding-top: 9px; width: 793px; text-align: center; font-size: 27px; line-height: 40px; font-weight: 400; color: #333; }
h2 span { text-decoration: underline; text-decoration-thickness: 2px; text-underline-offset: 1px; text-decoration-skip-ink: none; }
.treemap { display: grid; position: relative; width: 796px; height: 443px; }
.cell { border: solid #fff; border-width: 0 1px 1px 0; padding: 7px 1px 0 0; text-align: center; color: #f9f0f1; font-size: 11.500px; line-height: 15px; font-weight: 600; overflow: hidden; }
.cell div { height: 15px; display: flex; justify-content: center; }
.cell.darktext { color: #111; }
.nulls { position: absolute; right: 2px; bottom: 2px; width: 52px; height: 19px; border-radius: 3px; background: rgba(170, 150, 155, .85); color: #fff; text-align: center; font-size: 13px; font-weight: 700; line-height: 19px; }
.legend { width: 154px; height: 71px; background: #fff; border: 1px solid #d2d2d2; }
.lh { height: 29px; background: #fafafa; padding: 5px 0 0 6px; color: #555; }
.ramp { width: 144px; height: 16px; margin: 4px 0 0 4px; border: 1px solid #aaa294; display: flex; position: relative; }
.ramp i { flex: 1; }
.ramp::after { content: ""; position: absolute; left: 71px; top: 12px; width: 1px; height: 4px; background: #000; }
.ends { display: flex; justify-content: space-between; padding: 0 5px 0 4px; font-size: 12.500px; }

.tabs { height: 31px; flex: none; background: #e6e6e6; border: solid #c9c9c9; border-width: 1px 0; display: flex; line-height: 30px; color: #666; }
.tab { flex: none; height: 29px; border-right: 1px solid #c9c9c9; padding-left: 5px; overflow: hidden; }
.ds { width: 131px; display: flex; align-items: center; gap: 6px; padding-left: 9px; }
.ds + .tab { padding-left: 6px; }
.ds svg { margin-top: -3px; }
.active { width: 182px; background: #fafafa; font-weight: 600; color: #444; line-height: 28px; }
.cut { width: 20px; }
.new { width: 32px; display: flex; align-items: center; padding-left: 8px; }
.status { height: 20px; flex: none; background: #ebebeb; display: flex; padding-left: 3px; font-size: 11.500px; line-height: 20px; }
.status span { margin-right: 17px; }
.status svg { margin-left: auto; }

.taskbar { height: 40px; flex: none; position: relative; display: flex; align-items: center; }
.wall { position: absolute; left: 0; top: 0; }
.apps { display: flex; position: relative; height: 40px; }
.app { height: 40px; display: flex; align-items: center; justify-content: center; }
.box { border: 1px solid rgba(225, 240, 230, .55); background: rgba(200, 225, 205, .25); height: 39px; }
.start { width: 51px; }
.exp { width: 55px; margin-right: 3px; }
.stack { box-shadow: 4px 0 0 -1px rgba(200, 225, 205, .4); }
.word { width: 66px; }
.xl { width: 59px; }
.chrome { width: 54px; margin: 0 9px 0 3px; }
.photo { width: 59px; }
.tab-app { width: 60px; margin-left: 2px; background: rgba(225, 240, 228, .55); border-color: #e7f2ea; }
.tab-app svg { box-shadow: 1px 1px 0 #54766a; }
.tray { position: relative; margin-left: auto; }
.clock { position: relative; width: 91px; padding: 2px 0 0 1px; display: flex; flex-direction: column; align-items: center; color: #fff; line-height: 17px; }
</style>
